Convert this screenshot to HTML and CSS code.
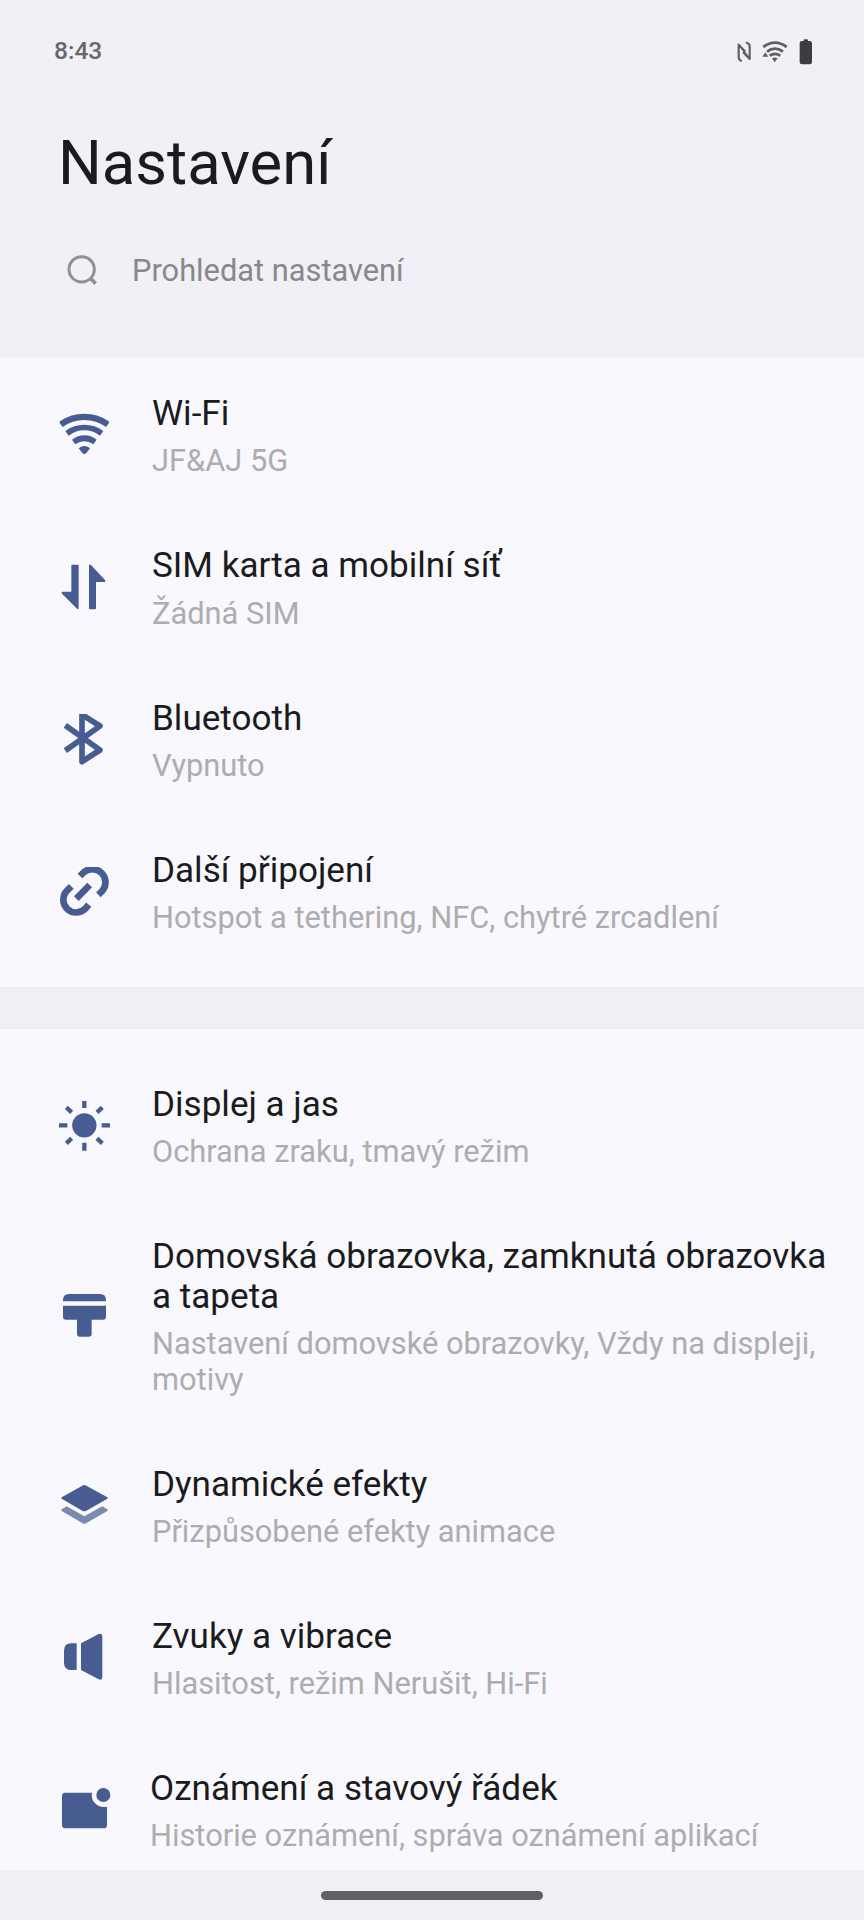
FILE: index.html
```html
<!DOCTYPE html>
<html lang="cs">
<head>
<meta charset="utf-8">
<title>Nastavení</title>
<link rel="stylesheet" href="styles.css">
</head>
<body>
<div class="screen">
  <header class="header">
    <div class="status">
      <span class="clock">8:43</span>
      <svg class="status-icons" viewBox="108 50 234 90" aria-hidden="true">
        <g fill="none" stroke="#606064" stroke-width="6.5" stroke-linecap="round" stroke-linejoin="round">
          <path d="M123 121Q116 118 116 109V73L134 92M140 67Q149 70 149 78V116L131 97"/>
          <path d="M116 73L149 114" stroke-width="4"/>
        </g>
        <g fill="none" stroke="#606064" stroke-width="8.5">
          <path d="M190 80Q225 54 260 80"/><path d="M201 94Q225 76 249 94"/><path d="M209 106Q225 95 241 106"/>
        </g>
        <path d="M187 109L196 96L205 109ZM216 114Q224 109 233 114L224 126Z" fill="#606064"/>
        <path d="M311 62V60Q311 57 315 57H320Q324 57 324 60V62H329Q336 62 336 69V125Q336 132 329 132H306Q299 132 299 125V69Q299 62 306 62Z" fill="#3d3d41"/>
      </svg>
    </div>
    <h1 class="heading">Nastavení</h1>
    <div class="search">
      <svg class="search-icon" viewBox="198 760 96 96" aria-hidden="true">
        <g fill="none" stroke="#919194" stroke-width="9"><circle cx="245" cy="806" r="38"/><path d="M271 833L287 849" stroke-width="11"/></g>
      </svg>
      <span class="search-text">Prohledat nastavení</span>
    </div>
    <div class="search-line"></div>
  </header>

  <main class="list">
    <section class="group group-network">
      <div class="row">
        <svg class="icon" viewBox="54 89 156 156" aria-hidden="true">
          <path d="M59 128Q57 125 61 122Q93 100 133 100Q173 100 205 122Q209 125 207 128L198 140Q169 119 133 119Q97 119 68 140ZM76 152Q101 133 133 133Q165 133 190 152L180 166Q158 150 133 150Q108 150 86 166ZM96 178Q113 165 133 165Q153 165 170 178L160 192Q147 183 133 183Q119 183 106 192ZM116 204Q124 197 133 197Q142 197 150 204L139 218Q133 224 127 218Z"/>
        </svg>
        <div class="text"><div class="title">Wi-Fi</div><div class="sub">JF&amp;AJ 5G</div></div>
      </div>
      <div class="row">
        <svg class="icon" viewBox="54 545 156 156" aria-hidden="true">
          <path d="M97 553H113Q116 553 116 556V682Q116 688 111 685L66 640Q63 634 69 634H94V556Q94 553 97 553ZM150 687Q147 687 147 684V557Q147 550 153 554L195 599Q198 605 192 605H168V684Q168 687 165 687Z"/>
        </svg>
        <div class="text"><div class="title">SIM karta a mobilní síť</div><div class="sub">Žádná SIM</div></div>
      </div>
      <div class="row">
        <svg class="icon" viewBox="54 103 156 156" aria-hidden="true">
          <path class="line" d="M76 137L180 211L126 246V105L180 139L76 213" stroke-width="17" stroke-linejoin="round"/>
        </svg>
        <div class="text"><div class="title">Bluetooth</div><div class="sub">Vypnuto</div></div>
      </div>
      <div class="row">
        <svg class="icon" viewBox="54 561 156 156" aria-hidden="true">
          <path class="line" d="M120 588L129 579A37 37 0 0 1 185 635L175 644M94 619L81 632A37 37 0 0 0 136 686L146 674M109 656L149 615" stroke-width="20"/>
        </svg>
        <div class="text"><div class="title">Další připojení</div><div class="sub">Hotspot a tethering, NFC, chytré zrcadlení</div></div>
      </div>
    </section>

    <section class="group group-device">
      <div class="row">
        <svg class="icon" viewBox="54 423 156 156" aria-hidden="true">
          <circle cx="133" cy="496" r="36.5"/>
          <path class="line" d="M133 420V444M133 548V572M57 496H82M185 496H210M79 442L95 457M187 442L171 457M79 550L95 535M187 550L171 535" stroke-width="13"/>
        </svg>
        <div class="text"><div class="title">Displej a jas</div><div class="sub">Ochrana zraku, tmavý režim</div></div>
      </div>
      <div class="row row-tall">
        <svg class="icon" viewBox="54 213 156 156" aria-hidden="true">
          <path d="M69 244V240Q69 222 87 222H180Q198 222 198 240V244ZM69 257H198V290Q198 299 189 299H155V341Q155 350 146 350H120Q111 350 111 341V299H78Q69 299 69 290Z"/>
        </svg>
        <div class="text"><div class="title">Domovská obrazovka, zamknutá obrazovka a tapeta</div><div class="sub">Nastavení domovské obrazovky, Vždy na displeji, motivy</div></div>
      </div>
      <div class="row">
        <svg class="icon" viewBox="54 783 156 156" aria-hidden="true">
          <path d="M65 832L127 797Q133 793 139 797L202 832Q205 834 202 836L139 872Q133 876 127 872L65 836Q62 834 65 832Z"/>
          <path d="M65 868L80 859L133 889L187 859L202 868Q205 870 202 873L138 910Q133 913 128 910L65 873Q62 870 65 868Z" fill="#7a8bb1"/>
        </svg>
        <div class="text"><div class="title">Dynamické efekty</div><div class="sub">Přizpůsobené efekty animace</div></div>
      </div>
      <div class="row">
        <svg class="icon" viewBox="54 156 156 156" aria-hidden="true">
          <path d="M110 190V270H94Q72 270 72 248V212Q72 190 94 190ZM123 190L176 162Q187 158 187 169V291Q187 303 176 298L123 270Z"/>
        </svg>
        <div class="text"><div class="title">Zvuky a vibrace</div><div class="sub">Hlasitost, režim Nerušit, Hi-Fi</div></div>
      </div>
      <div class="row row-last">
        <svg class="icon icon-wide" viewBox="54 613 156 156" aria-hidden="true">
          <path d="M76 639H156Q153 658 165 671Q179 685 201 681V736Q201 746 191 746H76Q66 746 66 736V649Q66 639 76 639Z"/>
          <circle cx="190" cy="646" r="21"/>
        </svg>
        <div class="text"><div class="title">Oznámení a stavový řádek</div><div class="sub">Historie oznámení, správa oznámení aplikací</div></div>
      </div>
    </section>
  </main>

  <footer class="nav"><div class="pill"></div></footer>
</div>
</body>
</html>
```
FILE: styles.css
```css
* { box-sizing: border-box; }
body { margin: 0; font-family: Roboto, "Noto Sans", sans-serif; background: #f0f0f6; }
.screen { width: 864px; height: 1920px; display: flex; flex-direction: column; overflow: hidden; }

.header { height: 357.6px; flex: none; display: flex; flex-direction: column; padding: 36px 52px 0 54px; background: #f0f0f6; }
.status { display: flex; justify-content: space-between; height: 32px; }
.clock { font-size: 24.5px; line-height: 30px; font-weight: 500; color: #68686c; }
.status-icons { width: 78px; height: 30px; margin: 1px -2px 0 0; }
.heading { margin: 59px 0 0 4px; font-size: 61.5px; line-height: 72px; font-weight: 400; color: #1a1a20; }
.search { display: flex; align-items: center; height: 36px; margin-top: 53px; padding-left: 12px; gap: 34px; }
.search-icon { width: 32px; height: 32px; }
.search-text { padding-top: 2px; font-size: 30.8px; line-height: 36px; color: #88888b; }
.search-line { height: 9px; margin-top: 20px; background: #f0f0f1; filter: blur(1px); }

.list { flex: 1; min-height: 0; overflow: hidden; display: flex; flex-direction: column; gap: 41.5px; background: #f0eff5; }
.group { flex: none; background: #f9f8fe; }
.group-network { padding: 2px 0 18.4px; }
.group-device { padding-top: 22px; }
.row { display: flex; align-items: center; height: 152.3px; padding: 0 30px 0 58px; }
.group-device .row { height: 151.9px; }
.group-device .row-tall { height: 228px; }
.icon { flex: none; width: 52px; height: 52px; fill: #475d92; }
.icon-wide { overflow: visible; }
.line { fill: none; stroke: #475d92; }
.text { flex: 1; margin-left: 42px; padding-top: 1.4px; }
.row-last .text { margin-left: 40px; }
.title { font-size: 35.1px; line-height: 40.3px; color: #1a1b20; }
.sub { margin-top: 9.8px; font-size: 30.8px; line-height: 36.5px; color: #adadb1; }

.nav { flex: none; height: 50px; padding: 21px 0 0 321px; background: #f0eff5; }
.pill { width: 222px; height: 8.5px; border-radius: 5px; background: #606164; }
```
